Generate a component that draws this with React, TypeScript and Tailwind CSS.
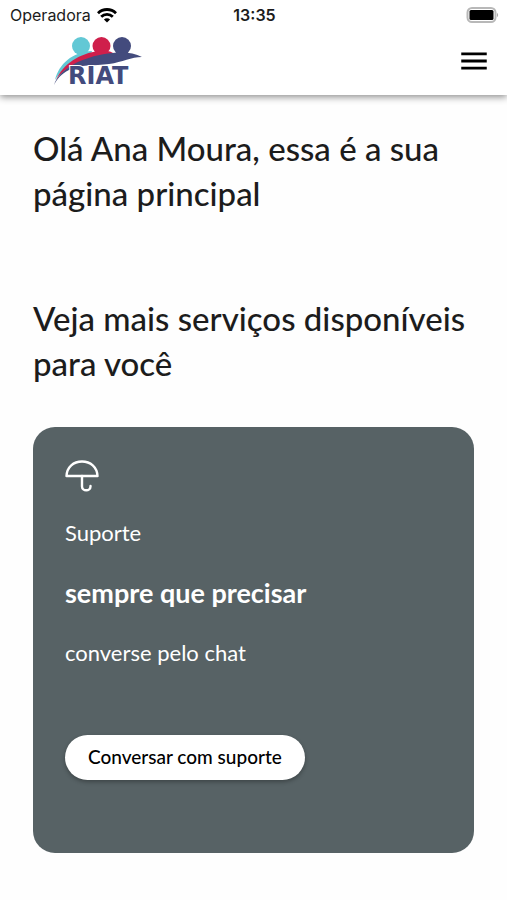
import { MdMenu } from "react-icons/md";

const StatusBar = () => {
	return (
		<div className="grid grid-cols-3 items-center h-[30px] pl-[10px] pr-2 text-base text-[#1c1c1c] font-['Inter','Liberation_Sans',sans-serif]">
			<div className="flex items-center gap-[6px]">
				<span>Operadora</span>
				<svg viewBox="0 0 20 15" className="w-5 h-[15px]" fill="none" stroke="#000" strokeWidth="2.8">
					<path d="M1 5.2a12.8 12.8 0 0 1 18 0" />
					<path d="M4.2 8.7a8.2 8.2 0 0 1 11.6 0" />
					<path d="M10 14.6 6.9 11.5a4.4 4.4 0 0 1 6.2 0Z" fill="#000" stroke="none" />
				</svg>
			</div>
			<span className="text-center font-semibold">13:35</span>
			<svg viewBox="0 0 33 17" className="w-[33px] h-[17px] justify-self-end">
				<rect x="1.5" y="1" width="28" height="14" rx="4.5" fill="#fff" stroke="#b8b8b8" strokeWidth="2" />
				<rect x="3.5" y="3" width="24" height="10" rx="1.5" fill="#000" />
				<path d="M31 6v4c1.5-.7 1.5-3.3 0-4Z" fill="#aaa" />
			</svg>
		</div>
	);
};

const Logo = () => {
	return (
		<svg viewBox="0 0 90 54" className="w-[90px] h-[54px]" role="img" aria-label="RIAT">
			<circle cx="28" cy="10" r="9" fill="#62c8d5" />
			<circle cx="48.5" cy="10" r="9" fill="#cf1f4b" />
			<circle cx="69" cy="10" r="9" fill="#434b7d" />
			<path d="M2 44C6 28 19 16 39 15l-2 6C21 24 9 32 2 44Z" fill="#62c8d5" />
			<path d="M3 44C10 28 27 17 46 15c7-1 12 0 16 3L50 22C30 24 12 30 3 44Z" fill="#cf1f4b" />
			<path d="M1 49C6 33 29 21 55 17.5c13-2 25-1.500 34 3.500-11 0-19 5-33 7-15 2-29 0-40 6C8 38 4 43 1 49Z" fill="#434b7d" />
			<text
				x="15"
				y="48"
				fontFamily="DejaVu Sans, sans-serif"
				fontSize="24"
				fontWeight="700"
				fill="#434b7d"
				stroke="#fff"
				strokeWidth="2"
				paintOrder="stroke"
			>
				RIAT
			</text>
		</svg>
	);
};

const Header = () => {
	return (
		<header className="bg-white shadow-[0_2px_7px_rgba(0,0,0,0.45)]">
			<StatusBar />
			<div className="flex items-start justify-between h-[65px] pl-[53px] pr-4 pt-[6px]">
				<Logo />
				<button type="button" aria-label="Menu" className="mt-2 text-black">
					<MdMenu size={34} />
				</button>
			</div>
		</header>
	);
};

const UmbrellaIcon = () => {
	return (
		<svg viewBox="0 0 34 32" className="w-[34px] h-8" fill="none" stroke="#fff" strokeWidth="2.4" strokeLinecap="round" strokeLinejoin="round">
			<path d="M1.5 16C2 7 8.5 1.5 17 1.5S32 7 32.5 16Z" />
			<path d="M17 16v10.500c0 5 8.500 5 8.500 0V26" />
		</svg>
	);
};

const SupportCard = () => {
	return (
		<section className="flex flex-col items-start mt-[41px] px-8 pt-[33px] pb-[73px] rounded-[22px] bg-[#576265] text-white">
			<UmbrellaIcon />
			<p className="mt-[26px] text-[22px] leading-[30px]">Suporte</p>
			<h3 className="mt-[29px] text-[27px] leading-[32px] font-bold">sempre que precisar</h3>
			<p className="mt-[29px] text-[22px] leading-[30px]">converse pelo chat</p>
			<button
				type="button"
				className="mt-[67px] h-[45px] px-[23px] rounded-full bg-white text-black text-[19px] font-medium shadow-[0_2px_4px_rgba(0,0,0,0.3)]"
			>
				Conversar com suporte
			</button>
		</section>
	);
};

const App = () => {
	return (
		<div className="min-h-screen bg-[#fefefe] font-['Lato','Open_Sans',sans-serif]">
			<Header />
			<main className="px-[33px] pt-[31px] pb-[46px] text-[#1c1c1c]">
				<h1 className="text-[33px] leading-[45px] font-medium">
					Olá Ana Moura, essa é a sua página principal
				</h1>
				<h2 className="mt-20 text-[33px] leading-[45px] font-medium">
					Veja mais serviços disponíveis para você
				</h2>
				<SupportCard />
			</main>
		</div>
	);
};

export default App;
